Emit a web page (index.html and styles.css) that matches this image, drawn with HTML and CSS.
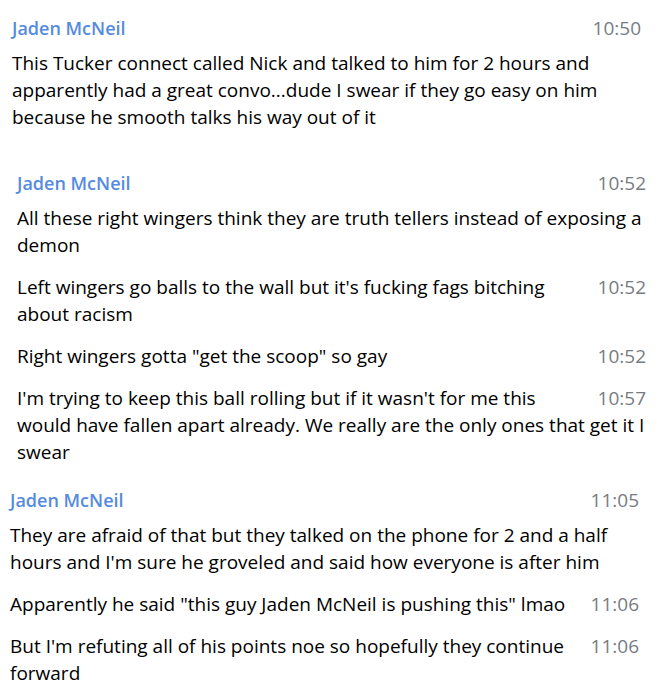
FILE: index.html
```html
<!DOCTYPE html>
<html lang="en">
<head>
<meta charset="utf-8">
<title>Jaden McNeil</title>
<link rel="stylesheet" href="styles.css">
</head>
<body>
<div class="history">

  <div class="group group-1">
    <div class="message">
      <div class="date">10:50</div>
      <div class="from">Jaden McNeil</div>
      <div class="text">This Tucker connect called Nick and talked to him for 2 hours and apparently had a great convo...dude I swear if they go easy on him because he smooth talks his way out of it</div>
    </div>
  </div>

  <div class="group group-2">
    <div class="message">
      <div class="date">10:52</div>
      <div class="from">Jaden McNeil</div>
      <div class="text">All these right wingers think they are truth tellers instead of exposing a demon</div>
    </div>
    <div class="message joined">
      <div class="date">10:52</div>
      <div class="text">Left wingers go balls to the wall but it's fucking fags bitching about racism</div>
    </div>
    <div class="message joined">
      <div class="date">10:52</div>
      <div class="text">Right wingers gotta "get the scoop" so gay</div>
    </div>
    <div class="message joined">
      <div class="date">10:57</div>
      <div class="text">I'm trying to keep this ball rolling but if it wasn't for me this would have fallen apart already. We really are the only ones that get it I swear</div>
    </div>
  </div>

  <div class="group group-3">
    <div class="message">
      <div class="date">11:05</div>
      <div class="from">Jaden McNeil</div>
      <div class="text">They are afraid of that but they talked on the phone for 2 and a half hours and I'm sure he groveled and said how everyone is after him</div>
    </div>
    <div class="message joined">
      <div class="date">11:06</div>
      <div class="text">Apparently he said "this guy Jaden McNeil is pushing this" lmao</div>
    </div>
    <div class="message joined">
      <div class="date">11:06</div>
      <div class="text">But I'm refuting all of his points noe so hopefully they continue forward</div>
    </div>
  </div>

</div>
</body>
</html>
```
FILE: styles.css
```css
html, body {
  margin: 0;
  padding: 0;
  background: #ffffff;
}

body {
  font-family: "Open Sans", "Noto Sans", sans-serif;
  color: #000000;
}

.history {
  padding-top: 15px;
  display: flex;
  flex-direction: column;
}

.group {
  width: 629px;
  display: flex;
  flex-direction: column;
  gap: 15px;
}

.group-1 { margin-left: 12px; }
.group-2 { margin-left: 17px; margin-top: 39px; }
.group-3 { margin-left: 10px; margin-top: 21px; }

.message::after {
  content: "";
  display: block;
  clear: both;
}

.date {
  float: right;
  margin-left: 10px;
  font-size: 19px;
  line-height: 27px;
  color: #777c82;
}

.from {
  font-size: 18px;
  font-weight: 600;
  line-height: 27px;
  color: #558be0;
  margin-bottom: 8px;
}

.text {
  font-size: 19px;
  line-height: 27px;
}
```
